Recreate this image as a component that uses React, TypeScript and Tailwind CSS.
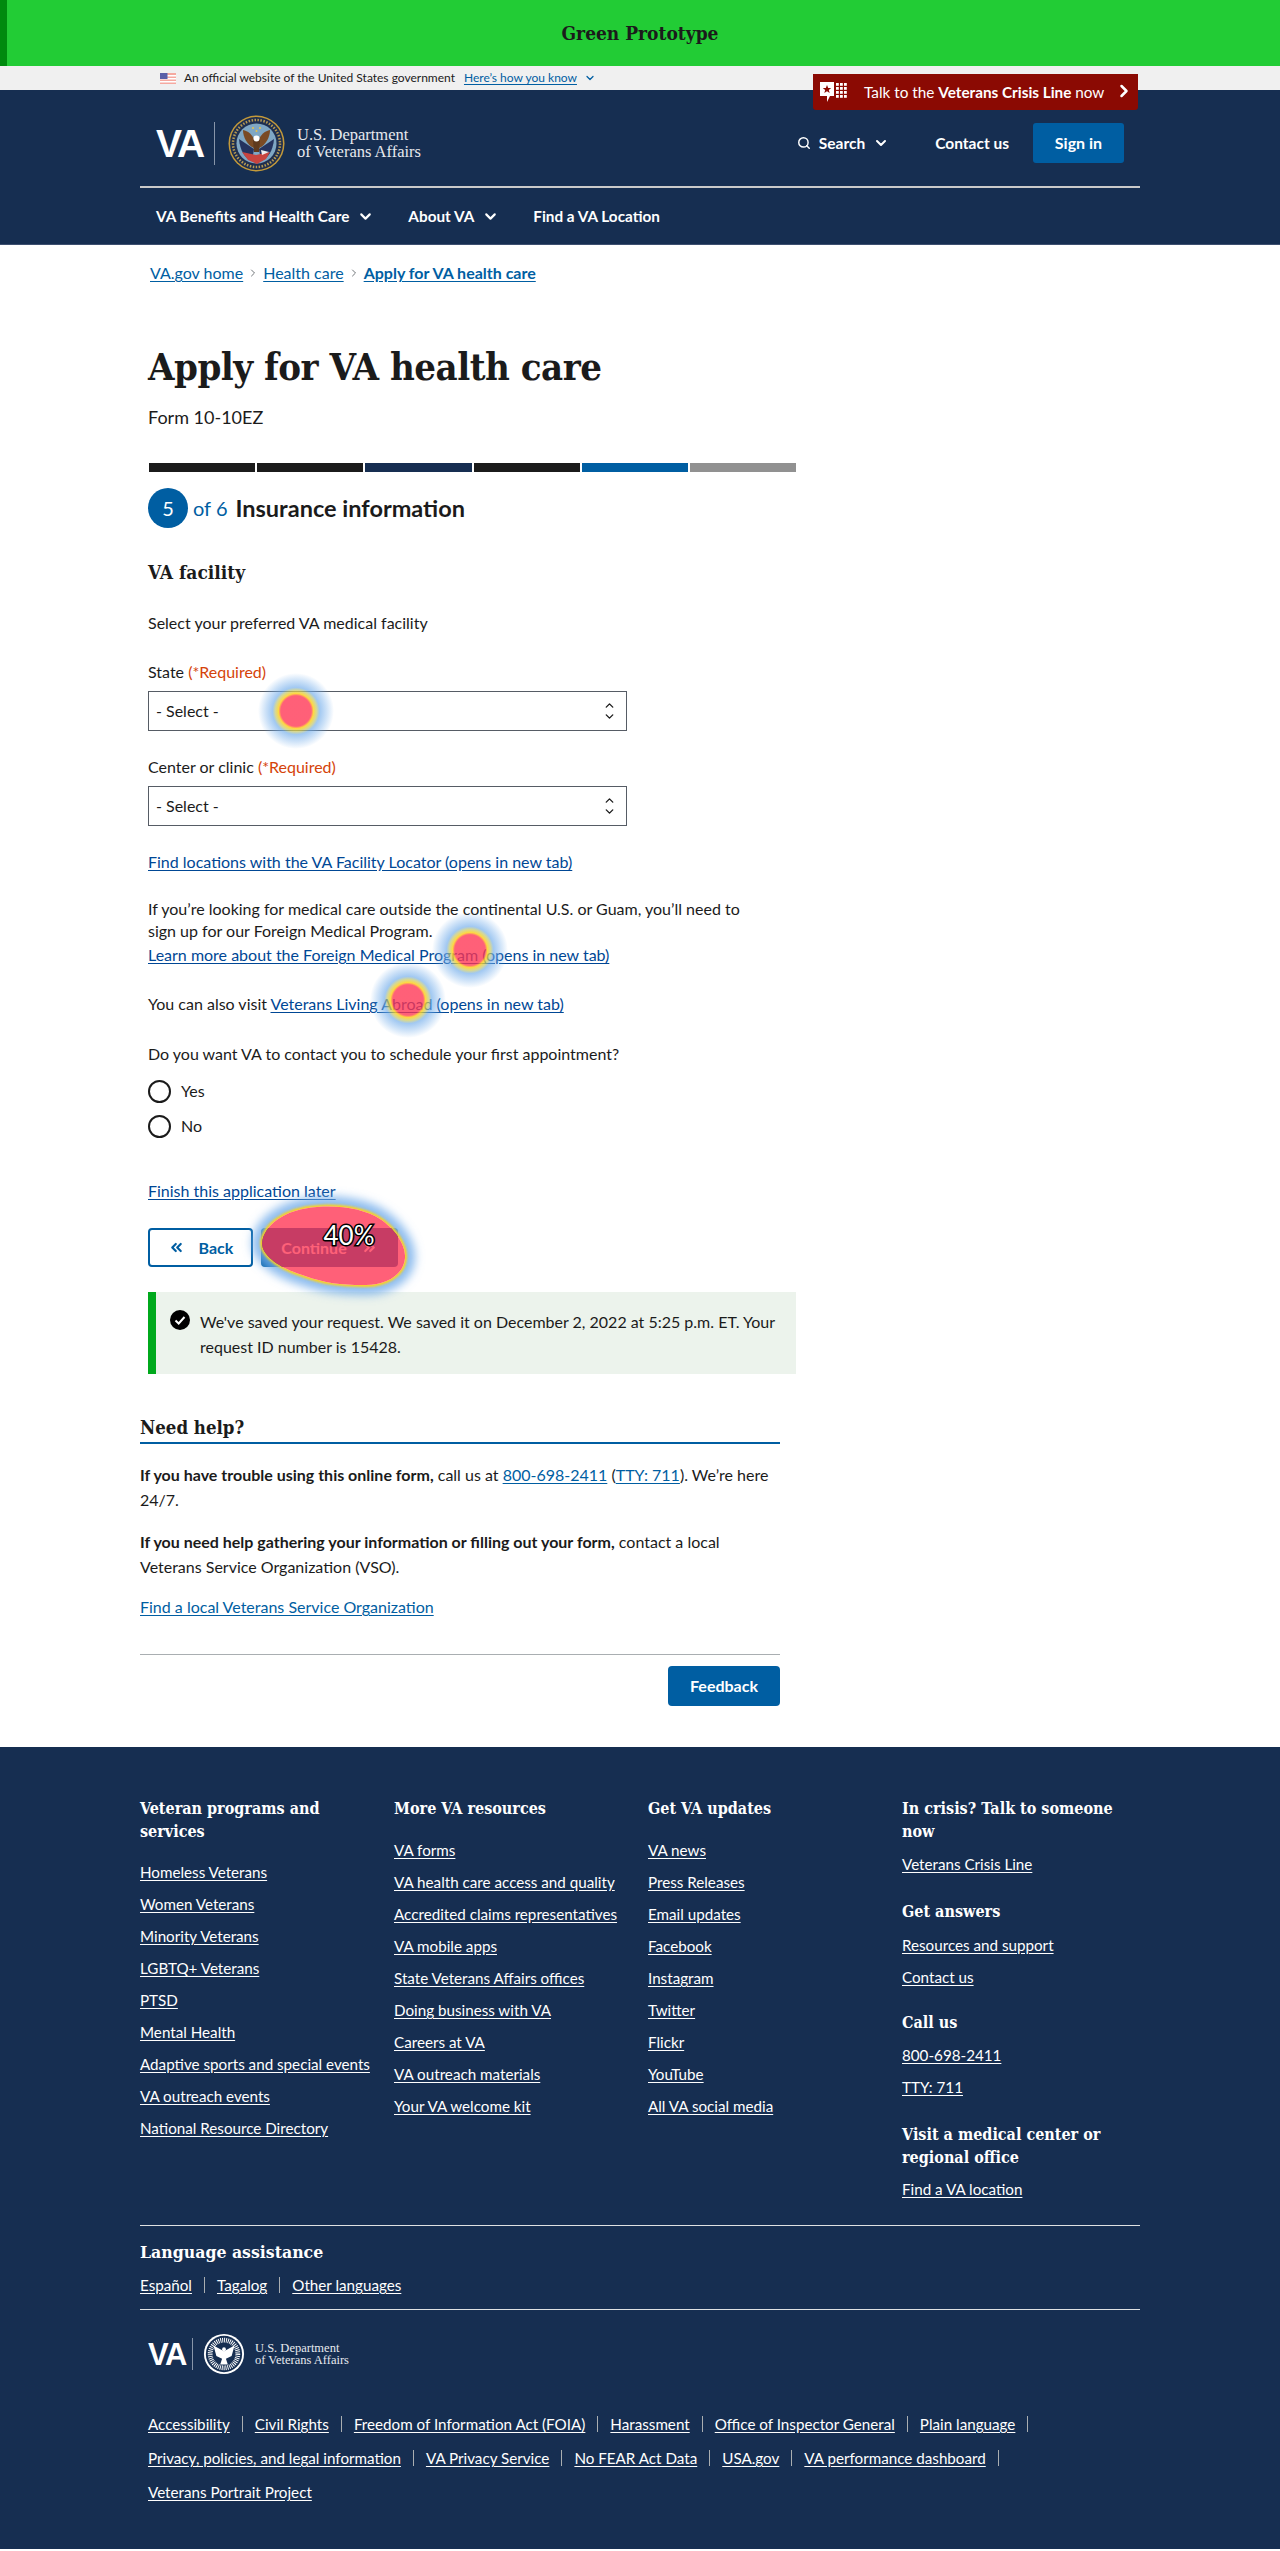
import { ChevronDown, ChevronRight, ChevronsLeft, ChevronsRight, ChevronUp, Search } from 'lucide-react';

const serif = "font-['DejaVu_Serif_Condensed','DejaVu_Serif',serif]";

const blobPath =
  'M262 1243 C264 1225 285 1209 317 1207 C340 1205 365 1209 380 1219 C395 1229 406 1245 405 1258 C404 1275 385 1286 363 1285 C340 1285 325 1283 305 1276 C285 1270 262 1258 262 1243 Z';

const footerColumns = [
  {
    title: 'Veteran programs and services',
    titleClass: 'w-[220px]',
    gap: 'mt-[17px]',
    links: [
      'Homeless Veterans',
      'Women Veterans',
      'Minority Veterans',
      'LGBTQ+ Veterans',
      'PTSD',
      'Mental Health',
      'Adaptive sports and special events',
      'VA outreach events',
      'National Resource Directory',
    ],
  },
  {
    title: 'More VA resources',
    titleClass: '',
    gap: 'mt-[18px]',
    links: [
      'VA forms',
      'VA health care access and quality',
      'Accredited claims representatives',
      'VA mobile apps',
      'State Veterans Affairs offices',
      'Doing business with VA',
      'Careers at VA',
      'VA outreach materials',
      'Your VA welcome kit',
    ],
  },
  {
    title: 'Get VA updates',
    titleClass: '',
    gap: 'mt-[18px]',
    links: [
      'VA news',
      'Press Releases',
      'Email updates',
      'Facebook',
      'Instagram',
      'Twitter',
      'Flickr',
      'YouTube',
      'All VA social media',
    ],
  },
];

const bottomRows = [
  ['Accessibility', 'Civil Rights', 'Freedom of Information Act (FOIA)', 'Harassment', 'Office of Inspector General', 'Plain language'],
  ['Privacy, policies, and legal information', 'VA Privacy Service', 'No FEAR Act Data', 'USA.gov', 'VA performance dashboard'],
  ['Veterans Portrait Project'],
];

function FooterHeading({ children, className = '' }: { children: React.ReactNode; className?: string }) {
  return <h3 className={`${serif} text-[16px] leading-[23px] font-bold text-white ${className}`}>{children}</h3>;
}

function FooterLink({ children }: { children: React.ReactNode }) {
  return <a className="block h-6 leading-6 text-white underline underline-offset-2 w-fit whitespace-nowrap">{children}</a>;
}

function Seal({ mono = false }: { mono?: boolean }) {
  if (mono) {
    return (
      <svg viewBox="0 0 44 44" className="w-[44px] h-[42px] shrink-0">
        <circle cx="22" cy="22" r="21" fill="#fff" />
        <circle cx="22" cy="22" r="19" fill="#162e51" />
        <circle cx="22" cy="22" r="14.5" fill="none" stroke="#fff" strokeWidth="5" strokeDasharray="1 1" />
        <path d="M22 19 L11 13 L14 24 L20 27 L18 33 L26 33 L24 27 L30 24 L33 13 Z" fill="#fff" />
        <circle cx="22" cy="17" r="2" fill="#fff" />
      </svg>
    );
  }
  return (
    <svg viewBox="0 0 57 57" className="w-[57px] h-[57px] shrink-0">
      <circle cx="28.5" cy="28.5" r="28" fill="#c49a3a" />
      <circle cx="28.5" cy="28.5" r="26.5" fill="#1f2f4f" />
      <circle cx="28.5" cy="28.5" r="20" fill="#7fa7c4" />
      <path d="M11 24 L26 34 L24 46 C17 43 12 36 11 24 Z" fill="#24335f" />
      <path d="M46 24 L31 34 L33 46 C40 43 45 36 46 24 Z" fill="#24335f" />
      <path d="M14 37 L28 40 L42 37 L38 44 L29 49 L20 45 Z" fill="#c8443f" />
      <path d="M27 26 C24 19 20 16 15 15 C15 22 19 30 26 33 Z" fill="#7a4a24" />
      <path d="M30 26 C33 19 37 16 42 15 C42 22 38 30 31 33 Z" fill="#7a4a24" />
      <path d="M25 26 C25 22 32 22 32 26 L31 37 L26 37 Z" fill="#5f3a1e" />
      <circle cx="28.5" cy="23.5" r="3" fill="#fff" />
      <path d="M33 35 L41 37 L34 40 Z" fill="#eee" />
      <circle cx="25" cy="13" r="1" fill="#e8c34a" />
      <circle cx="32" cy="13" r="1" fill="#e8c34a" />
      <circle cx="28.5" cy="16" r="1" fill="#e8c34a" />
      <circle cx="28.5" cy="28.5" r="23.5" fill="none" stroke="#b79a52" strokeWidth="2.5" strokeDasharray="1.5 1.5" />
    </svg>
  );
}

function Flag() {
  return (
    <svg viewBox="0 0 16 11" className="w-4 h-[11px] shrink-0">
      <rect width="16" height="11" fill="#f5a9a0" />
      <rect y="2" width="16" height="1.5" fill="#fff" />
      <rect y="5" width="16" height="1.5" fill="#fff" />
      <rect y="8" width="16" height="1.5" fill="#fff" />
      <rect width="7.5" height="6" fill="#5a5fa8" />
    </svg>
  );
}

function CrisisIcon() {
  return (
    <svg viewBox="0 0 29 21" className="w-[29px] h-[21px] shrink-0">
      <path d="M0 0 H14 V14 H10 L7 20 V14 H0 Z" fill="#fff" />
      <path d="M7 3 L8.2 6 L11.2 6 L8.8 8 L9.7 11 L7 9.2 L4.3 11 L5.2 8 L2.8 6 L5.8 6 Z" fill="#8b0a03" />
      {[16, 20, 24].map((x) =>
        [1, 5, 9, 13].map((y) => <rect key={`${x}-${y}`} x={x} y={y} width="2.8" height="2.8" fill="#fff" />),
      )}
    </svg>
  );
}

function StateSelect() {
  return (
    <div className="mt-[7px] w-[479px] h-10 border border-[#565c65] bg-white flex items-center justify-between pl-[7px] pr-[10px]">
      <span>- Select -</span>
      <span className="flex flex-col items-center text-[#1b1b1b]">
        <ChevronUp size={13} strokeWidth={2.5} className="-mb-px" />
        <ChevronDown size={13} strokeWidth={2.5} className="-mt-px" />
      </span>
    </div>
  );
}

function Radio({ label, className }: { label: string; className: string }) {
  return (
    <div className={`flex items-center h-6 ${className}`}>
      <span className="w-[23px] h-[23px] rounded-full border-2 border-[#1b1b1b] bg-white mr-[10px]" />
      {label}
    </div>
  );
}

// click map drawn over the finished page
function Heatmap() {
  return (
    <svg className="absolute left-0 top-0 pointer-events-none" width="1280" height="2551">
      <defs>
        <radialGradient id="spot">
          <stop offset="0.4" stopColor="#ff3352" stopOpacity="0.78" />
          <stop offset="0.46" stopColor="#ffd21f" stopOpacity="0.85" />
          <stop offset="0.54" stopColor="#c9c860" stopOpacity="0.7" />
          <stop offset="0.62" stopColor="#6fabea" stopOpacity="0.65" />
          <stop offset="0.8" stopColor="#6fabea" stopOpacity="0.35" />
          <stop offset="1" stopColor="#6fabea" stopOpacity="0" />
        </radialGradient>
        <filter id="soft" x="-30%" y="-30%" width="160%" height="160%">
          <feGaussianBlur stdDeviation="5" />
        </filter>
        <filter id="edge" x="-10%" y="-10%" width="120%" height="120%">
          <feGaussianBlur stdDeviation="1.2" />
        </filter>
        <mask id="outside" maskUnits="userSpaceOnUse" x="0" y="0" width="1280" height="2551">
          <rect width="1280" height="2551" fill="#fff" />
          <path d={blobPath} fill="#000" />
        </mask>
      </defs>
      <circle cx="296" cy="711" r="38" fill="url(#spot)" />
      <circle cx="470" cy="950" r="38" fill="url(#spot)" />
      <circle cx="408" cy="1000" r="38" fill="url(#spot)" />
      <g mask="url(#outside)">
        <path d={blobPath} fill="none" stroke="#6fabea" strokeOpacity="0.8" strokeWidth="20" filter="url(#soft)" />
        <path d={blobPath} fill="none" stroke="#ffd21f" strokeWidth="4" filter="url(#edge)" />
      </g>
      <path d={blobPath} fill="#ff3352" fillOpacity="0.78" />
      <text
        x="349"
        y="1245"
        textAnchor="middle"
        fontFamily="Lato, sans-serif"
        fontSize="26"
        fill="#fff"
        stroke="#000"
        strokeWidth="3"
        paintOrder="stroke"
      >
        40%
      </text>
    </svg>
  );
}

export default function App() {
  return (
    <div className="relative w-[1280px] font-['Lato',sans-serif] text-[16px] leading-6 text-[#1b1b1b] bg-white overflow-hidden">
      {/* prototype strip */}
      <div className="h-[66px] bg-[#22cc35] border-l-[7px] border-[#008a0e] flex items-center justify-center pr-[7px]">
        <span className={`${serif} text-[19px] font-bold`}>Green Prototype</span>
      </div>

      {/* gov banner */}
      <div className="h-6 bg-[#f0f0f0] flex items-center pl-[160px] text-[12px]">
        <Flag />
        <span className="ml-2">An official website of the United States government</span>
        <a className="ml-[9px] text-[#005ea2] underline underline-offset-2">Here’s how you know</a>
        <ChevronDown size={12} strokeWidth={2.5} className="ml-[7px] text-[#005ea2]" />
      </div>

      {/* crisis line */}
      <div className="absolute left-[813px] top-[74px] w-[325px] h-[36px] rounded-b-[3px] bg-[#8b0a03] text-white flex items-center pl-[7px] text-[15.3px]">
        <CrisisIcon />
        <span className="ml-[15px]">
          Talk to the <b>Veterans Crisis Line</b> now
        </span>
        <ChevronRight size={20} strokeWidth={3} className="absolute right-[4px] top-[7px]" />
      </div>

      {/* header */}
      <header className="h-[155px] bg-[#162e51] border-b border-[#3d4f70] text-white">
        <div className="ml-[140px] w-[1000px]">
          <div className="h-[98px] pt-[10px] pl-4 pr-4 flex items-center justify-between border-b-2 border-[#c9c9c9]">
            <div className="flex items-center">
              <span className="font-['Liberation_Sans',sans-serif] font-bold text-[39px] leading-none tracking-[-2px] w-[50px]">VA</span>
              <span className="w-px h-[43px] bg-[#8795a9] ml-[8px] mr-[13px]" />
              <Seal />
              <div className="ml-[12px] font-['Liberation_Serif',serif] text-[16.5px] leading-[17px] text-[#e6e9ee]">
                U.S. Department
                <br />
                of Veterans Affairs
              </div>
            </div>
            <div className="flex items-center font-bold text-[15.5px]">
              <Search size={14} strokeWidth={2.5} />
              <span className="ml-2">Search</span>
              <ChevronDown size={16} strokeWidth={3} className="ml-2" />
              <span className="ml-[46px]">Contact us</span>
              <span className="ml-[24px] w-[91px] h-10 rounded-[3px] bg-[#005ea2] flex items-center justify-center text-[16px]">Sign in</span>
            </div>
          </div>
          <nav className="h-[56px] pl-4 flex items-center font-bold text-[15.3px]">
            <span>VA Benefits and Health Care</span>
            <ChevronDown size={17} strokeWidth={3} className="ml-2" />
            <span className="ml-[34px]">About VA</span>
            <ChevronDown size={17} strokeWidth={3} className="ml-2" />
            <span className="ml-[34px]">Find a VA Location</span>
          </nav>
        </div>
      </header>

      {/* form */}
      <main className="pl-[148px]">
        <div className="pt-4 ml-[2px] flex items-center text-[#005ea2]">
          <a className="underline underline-offset-2">VA.gov home</a>
          <ChevronRight size={12} className="mx-[4px] text-[#71767a]" />
          <a className="underline underline-offset-2">Health care</a>
          <ChevronRight size={12} className="mx-[4px] text-[#71767a]" />
          <a className="underline underline-offset-2 font-bold">Apply for VA health care</a>
        </div>

        <h1 className={`${serif} mt-[58px] text-[38px] tracking-[-0.5px] leading-[48px] font-bold`}>Apply for VA health care</h1>
        <p className="mt-3 text-[18px] leading-7">Form 10-10EZ</p>

        <div className="mt-8 w-[647px] ml-px flex gap-[2px]">
          {['#1b1b1b', '#1b1b1b', '#162e51', '#1b1b1b', '#005ea2', '#919191'].map((color, i) => (
            <div key={i} className="h-[9px] flex-1" style={{ backgroundColor: color }} />
          ))}
        </div>

        <div className="mt-4 flex items-center">
          <span className="w-10 h-10 rounded-full bg-[#005ea2] text-white text-[20px] flex items-center justify-center">5</span>
          <span className="ml-[5px] text-[20px] text-[#005ea2]">of 6</span>
          <span className="ml-2 text-[23.5px] font-bold">Insurance information</span>
        </div>

        <h2 className={`${serif} mt-[30px] text-[19px] leading-7 font-bold`}>VA facility</h2>
        <p className="mt-[25px]">Select your preferred VA medical facility</p>

        <p className="mt-[25px]">
          State <span className="text-[#d54309]">(*Required)</span>
        </p>
        <StateSelect />
        <p className="mt-6">
          Center or clinic <span className="text-[#d54309]">(*Required)</span>
        </p>
        <StateSelect />

        <a className="block mt-6 text-[#004795] underline underline-offset-2 w-fit">Find locations with the VA Facility Locator (opens in new tab)</a>

        <p className="mt-6 leading-[22px]">
          If you’re looking for medical care outside the continental U.S. or Guam, you’ll need to
          <br />
          sign up for our Foreign Medical Program.
        </p>
        <a className="block mt-[2px] leading-[22px] text-[#004795] underline underline-offset-2 w-fit">
          Learn more about the Foreign Medical Program (opens in new tab)
        </a>
        <p className="mt-[26px]">
          You can also visit <a className="text-[#004795] underline underline-offset-2">Veterans Living Abroad (opens in new tab)</a>
        </p>
        <p className="mt-[26px]">Do you want VA to contact you to schedule your first appointment?</p>

        <Radio label="Yes" className="mt-[13px]" />
        <Radio label="No" className="mt-[11px]" />

        <a className="block mt-[41px] text-[#004795] underline underline-offset-2 w-fit">Finish this application later</a>

        <div className="mt-[25px] flex gap-2 font-bold">
          <span className="w-[105px] h-[39px] rounded-[4px] border-2 border-[#005ea2] text-[#005ea2] flex items-center justify-center">
            <ChevronsLeft size={17} strokeWidth={3} className="mr-[14px]" />
            Back
          </span>
          <span className="w-[137px] h-[39px] rounded-[4px] bg-[#005ea2] text-white flex items-center justify-center">
            Continue
            <ChevronsRight size={17} strokeWidth={3} className="ml-[14px]" />
          </span>
        </div>

        <div className="mt-[25px] w-[648px] h-[82px] bg-[#ecf3ec] border-l-8 border-[#00a91c] flex pl-[14px] pt-[17px]">
          <svg viewBox="0 0 20 20" className="w-5 h-5 mt-[1px] shrink-0">
            <circle cx="10" cy="10" r="10" fill="#000" />
            <path d="M5.5 10.5 L8.7 13.5 L14.5 7" fill="none" stroke="#fff" strokeWidth="2" />
          </svg>
          <p className="ml-[10px] w-[590px] leading-[25px]">
            We've saved your request. We saved it on December 2, 2022 at 5:25 p.m. ET. Your
            <br />
            request ID number is 15428.
          </p>
        </div>
      </main>

      {/* need help */}
      <section className="mt-10 ml-[140px] w-[640px]">
        <h2 className={`${serif} text-[18.5px] leading-7 font-bold border-b-2 border-[#005ea2] h-[30px]`}>Need help?</h2>
        <p className="mt-[18px] leading-[25px]">
          <b>If you have trouble using this online form,</b> call us at <a className="text-[#005ea2] underline underline-offset-2">800-698-2411</a> (
          <a className="text-[#005ea2] underline underline-offset-2">TTY: 711</a>). We’re here
          <br />
          24/7.
        </p>
        <p className="mt-[17px] leading-[25px]">
          <b>If you need help gathering your information or filling out your form,</b> contact a local
          <br />
          Veterans Service Organization (VSO).
        </p>
        <a className="block mt-4 text-[#005ea2] underline underline-offset-2 w-fit">Find a local Veterans Service Organization</a>
        <div className="mt-[35px] h-px bg-[#a9aeb1]" />
        <div className="mt-[11px] mb-[41px] flex justify-end">
          <span className="w-[112px] h-10 rounded-[4px] bg-[#005ea2] text-white font-bold flex items-center justify-center">Feedback</span>
        </div>
      </section>

      {/* footer */}
      <footer className="bg-[#162e51] text-white text-[15.2px] pt-[50px] pb-[45px] pl-[140px]">
        <div className="w-[1000px] grid grid-cols-[254px_254px_254px_238px]">
          {footerColumns.map((col) => (
            <div key={col.title}>
              <FooterHeading className={col.titleClass}>{col.title}</FooterHeading>
              <div className={`${col.gap} flex flex-col gap-2`}>
                {col.links.map((link) => (
                  <FooterLink key={link}>{link}</FooterLink>
                ))}
              </div>
            </div>
          ))}
          <div>
            <FooterHeading>
              In crisis? Talk to someone
              <br />
              now
            </FooterHeading>
            <div className="mt-[9px]">
              <FooterLink>Veterans Crisis Line</FooterLink>
            </div>
            <FooterHeading className="mt-6">Get answers</FooterHeading>
            <div className="mt-[10px] flex flex-col gap-2">
              <FooterLink>Resources and support</FooterLink>
              <FooterLink>Contact us</FooterLink>
            </div>
            <FooterHeading className="mt-[22px]">Call us</FooterHeading>
            <div className="mt-[9px] flex flex-col gap-2">
              <FooterLink>800-698-2411</FooterLink>
              <FooterLink>TTY: 711</FooterLink>
            </div>
            <FooterHeading className="mt-6 w-[220px]">Visit a medical center or regional office</FooterHeading>
            <div className="mt-2">
              <FooterLink>Find a VA location</FooterLink>
            </div>
          </div>
        </div>

        <div className="mt-6 w-[1000px] h-px bg-[#dfe1e2]" />
        <h3 className={`${serif} mt-[14px] text-[17.5px] leading-6 font-bold`}>Language assistance</h3>
        <div className="mt-[9px] flex items-center">
          <a className="underline underline-offset-2">Español</a>
          <span className="mx-3 w-px h-4 bg-[#a9aeb1]" />
          <a className="underline underline-offset-2">Tagalog</a>
          <span className="mx-3 w-px h-4 bg-[#a9aeb1]" />
          <a className="underline underline-offset-2">Other languages</a>
        </div>
        <div className="mt-3 w-[1000px] h-px bg-[#dfe1e2]" />

        <div className="mt-[23px] ml-2 h-[42px] flex items-center">
          <span className="font-['Liberation_Sans',sans-serif] font-bold text-[31px] leading-none tracking-[-1.5px] w-[36px]">VA</span>
          <span className="w-px h-8 bg-[#8795a9] ml-[8px] mr-[9px]" />
          <Seal mono />
          <div className="ml-[9px] font-['Liberation_Serif',serif] text-[12.5px] leading-[12.5px] text-[#e6e9ee]">
            U.S. Department
            <br />
            of Veterans Affairs
          </div>
        </div>

        <div className="mt-[37px] ml-2 flex flex-col gap-[10px]">
          {bottomRows.map((row, r) => (
            <div key={r} className="flex items-center h-6">
              {row.map((item) => (
                <span key={item} className="flex items-center">
                  <a className="underline underline-offset-2 whitespace-nowrap">{item}</a>
                  {r < 2 && <span className="mx-3 w-px h-4 bg-[#a9aeb1]" />}
                </span>
              ))}
            </div>
          ))}
        </div>
      </footer>

      <Heatmap />
    </div>
  );
}
